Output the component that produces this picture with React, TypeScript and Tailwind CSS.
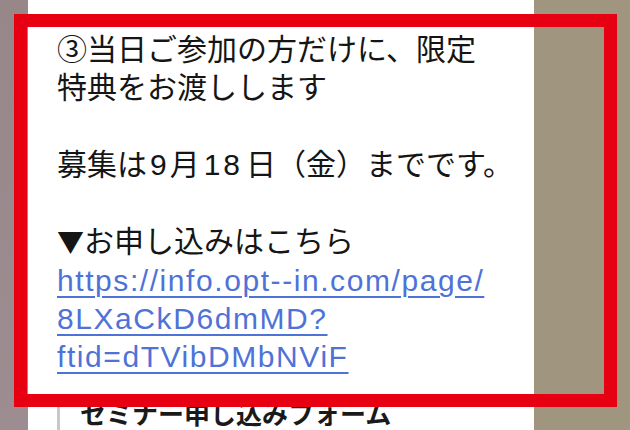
import React from "react";

export default function App() {
  return (
    <div className="relative flex w-[630px] h-[430px] overflow-hidden font-['Liberation_Sans','Noto_Sans_CJK_JP',sans-serif]">
      <div className="w-[28px] shrink-0 bg-gradient-to-b from-[#988789] to-[#9d8d90]" />
      <div className="w-[506px] shrink-0 bg-white pl-[29px] pt-[31px]">
        <div className="text-[30px] leading-[38.3px] text-[#151515]">
          <div>③当日ご参加の方だけに、限定</div>
          <div>特典をお渡しします</div>
          <div>&nbsp;</div>
          <div>
            募集は<span className="px-[3px]">9</span>月<span className="pl-[4px] pr-[3px] tracking-[3px]">18</span>日（金）までです。
          </div>
          <div>&nbsp;</div>
          <div>
            <span className="font-['Noto_Sans_CJK_JP',sans-serif] text-[27px]">▼</span>お申し込みはこちら
          </div>
          <a
            href="#"
            className="block text-[#4f72d8] underline decoration-[1.5px] underline-offset-[5px] tracking-[1.57px]"
          >
            https://info.opt--in.com/page/
            <br />
            8LXaCkD6dmMD?
            <br />
            ftid=dTVibDMbNViF
          </a>
        </div>
        <div className="mt-[21px] border-l-[3px] border-[#c8c8c8] pl-[20px] text-[26px] leading-[34px] font-bold text-[#1a1a1a]">
          セミナー申し込みフォーム
        </div>
      </div>
      <div className="flex-1 bg-[#a0957f]" />
      <div className="pointer-events-none absolute left-[14px] top-[14px] w-[603px] h-[393px] border-[13px] border-[#e60012]" />
    </div>
  );
}
